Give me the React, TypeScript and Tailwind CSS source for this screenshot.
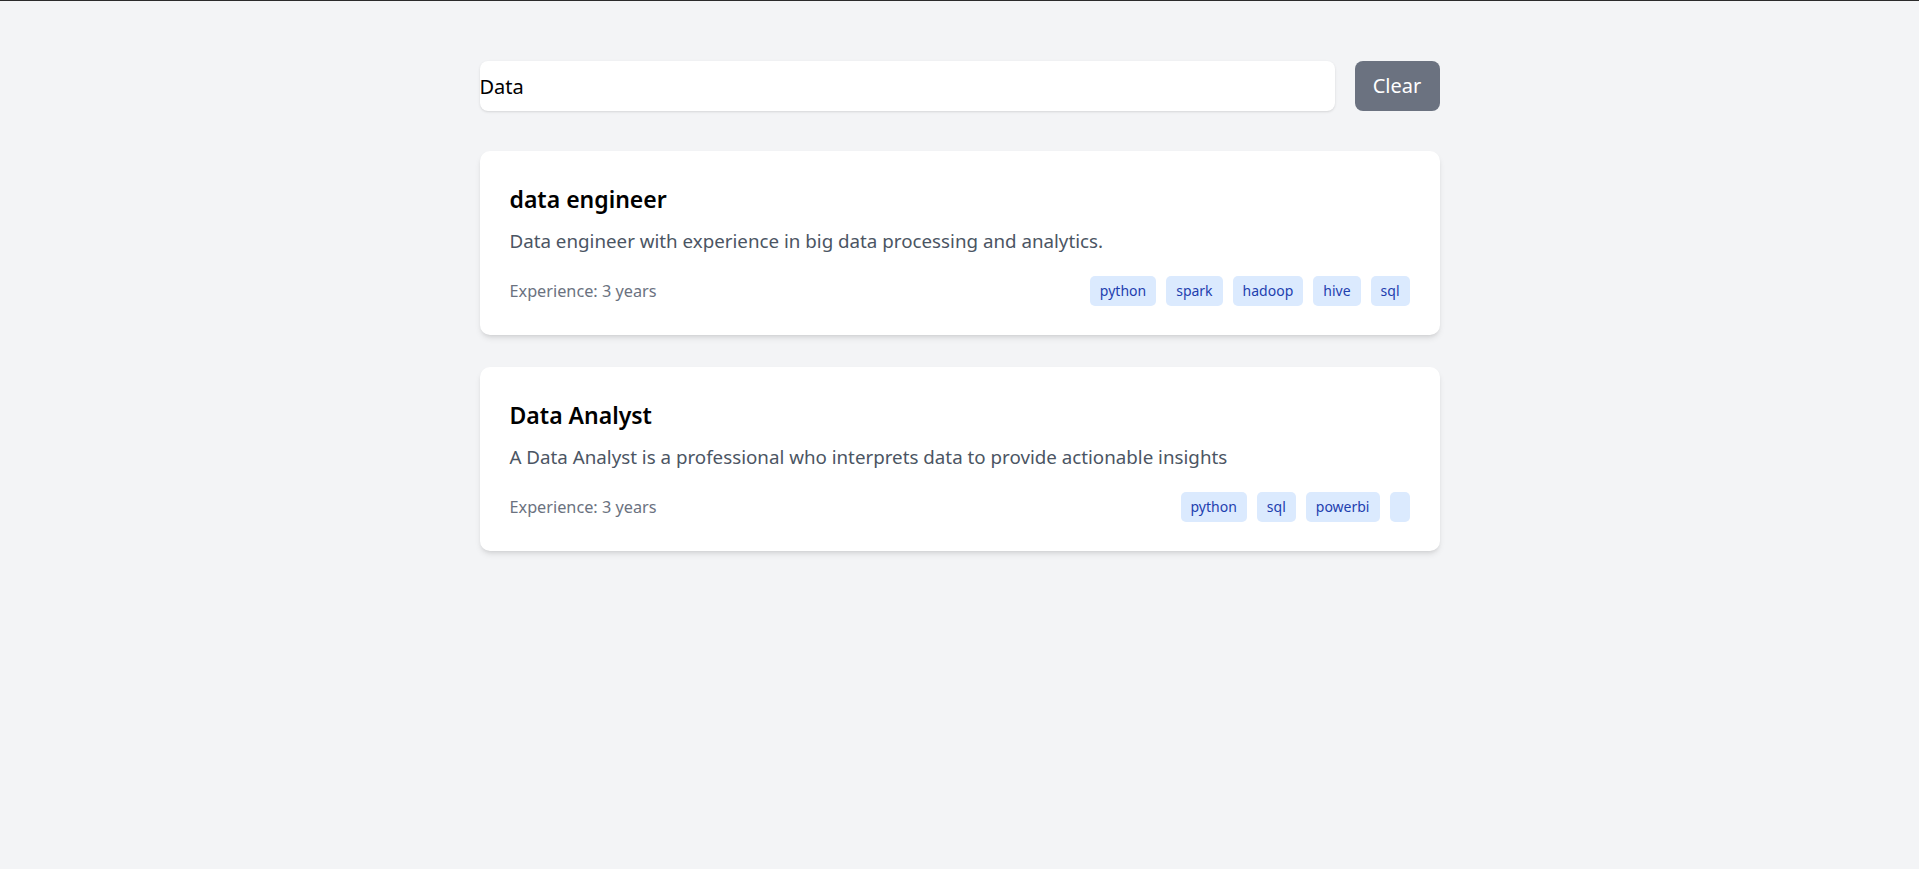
import React from "react";

type Profile = {
  title: string;
  description: string;
  experience: number;
  skills: string[];
};

const profiles: Profile[] = [
  {
    title: "data engineer",
    description: "Data engineer with experience in big data processing and analytics.",
    experience: 3,
    skills: ["python", "spark", "hadoop", "hive", "sql"],
  },
  {
    title: "Data Analyst",
    description: "A Data Analyst is a professional who interprets data to provide actionable insights",
    experience: 3,
    skills: ["python", "sql", "powerbi", ""],
  },
];

export default function App() {
  return (
    <div
      className="min-h-[869px] bg-[#f3f4f6] border-t border-[#2b2b2b]"
      style={{ fontFamily: '"Noto Sans", "Open Sans", sans-serif' }}
    >
      <div className="mx-auto w-[960px] pt-[60px]">
        <div className="flex gap-5 mb-10">
          <input
            className="flex-1 h-[50px] bg-white rounded-lg shadow-sm text-[20px] text-black outline-none p-0"
            defaultValue="Data"
          />
          <button className="h-[50px] w-[85px] rounded-lg bg-[#6b7280] text-white text-[20px]">
            Clear
          </button>
        </div>
        <div className="flex flex-col gap-8">
          {profiles.map((p) => (
            <div key={p.title} className="bg-white rounded-[10px] shadow-md px-[30px] pt-[32px] pb-[29px]">
              <h2 className="text-[23px] font-semibold text-black leading-8">{p.title}</h2>
              <p className="mt-3 text-[18.75px] leading-7 text-[#4b5563]">{p.description}</p>
              <div className="mt-[21px] flex justify-between items-center">
                <span className="text-[16.25px] leading-6 text-[#6b7280]">Experience: {p.experience} years</span>
                <div className="flex gap-2.5 h-[30px]">
                  {p.skills.map((s, i) => (
                    <span
                      key={i}
                      className="bg-[#dbeafe] text-[#1e40af] text-sm rounded-[5px] px-2.5 flex items-center"
                    >
                      {s}
                    </span>
                  ))}
                </div>
              </div>
            </div>
          ))}
        </div>
      </div>
    </div>
  );
}
